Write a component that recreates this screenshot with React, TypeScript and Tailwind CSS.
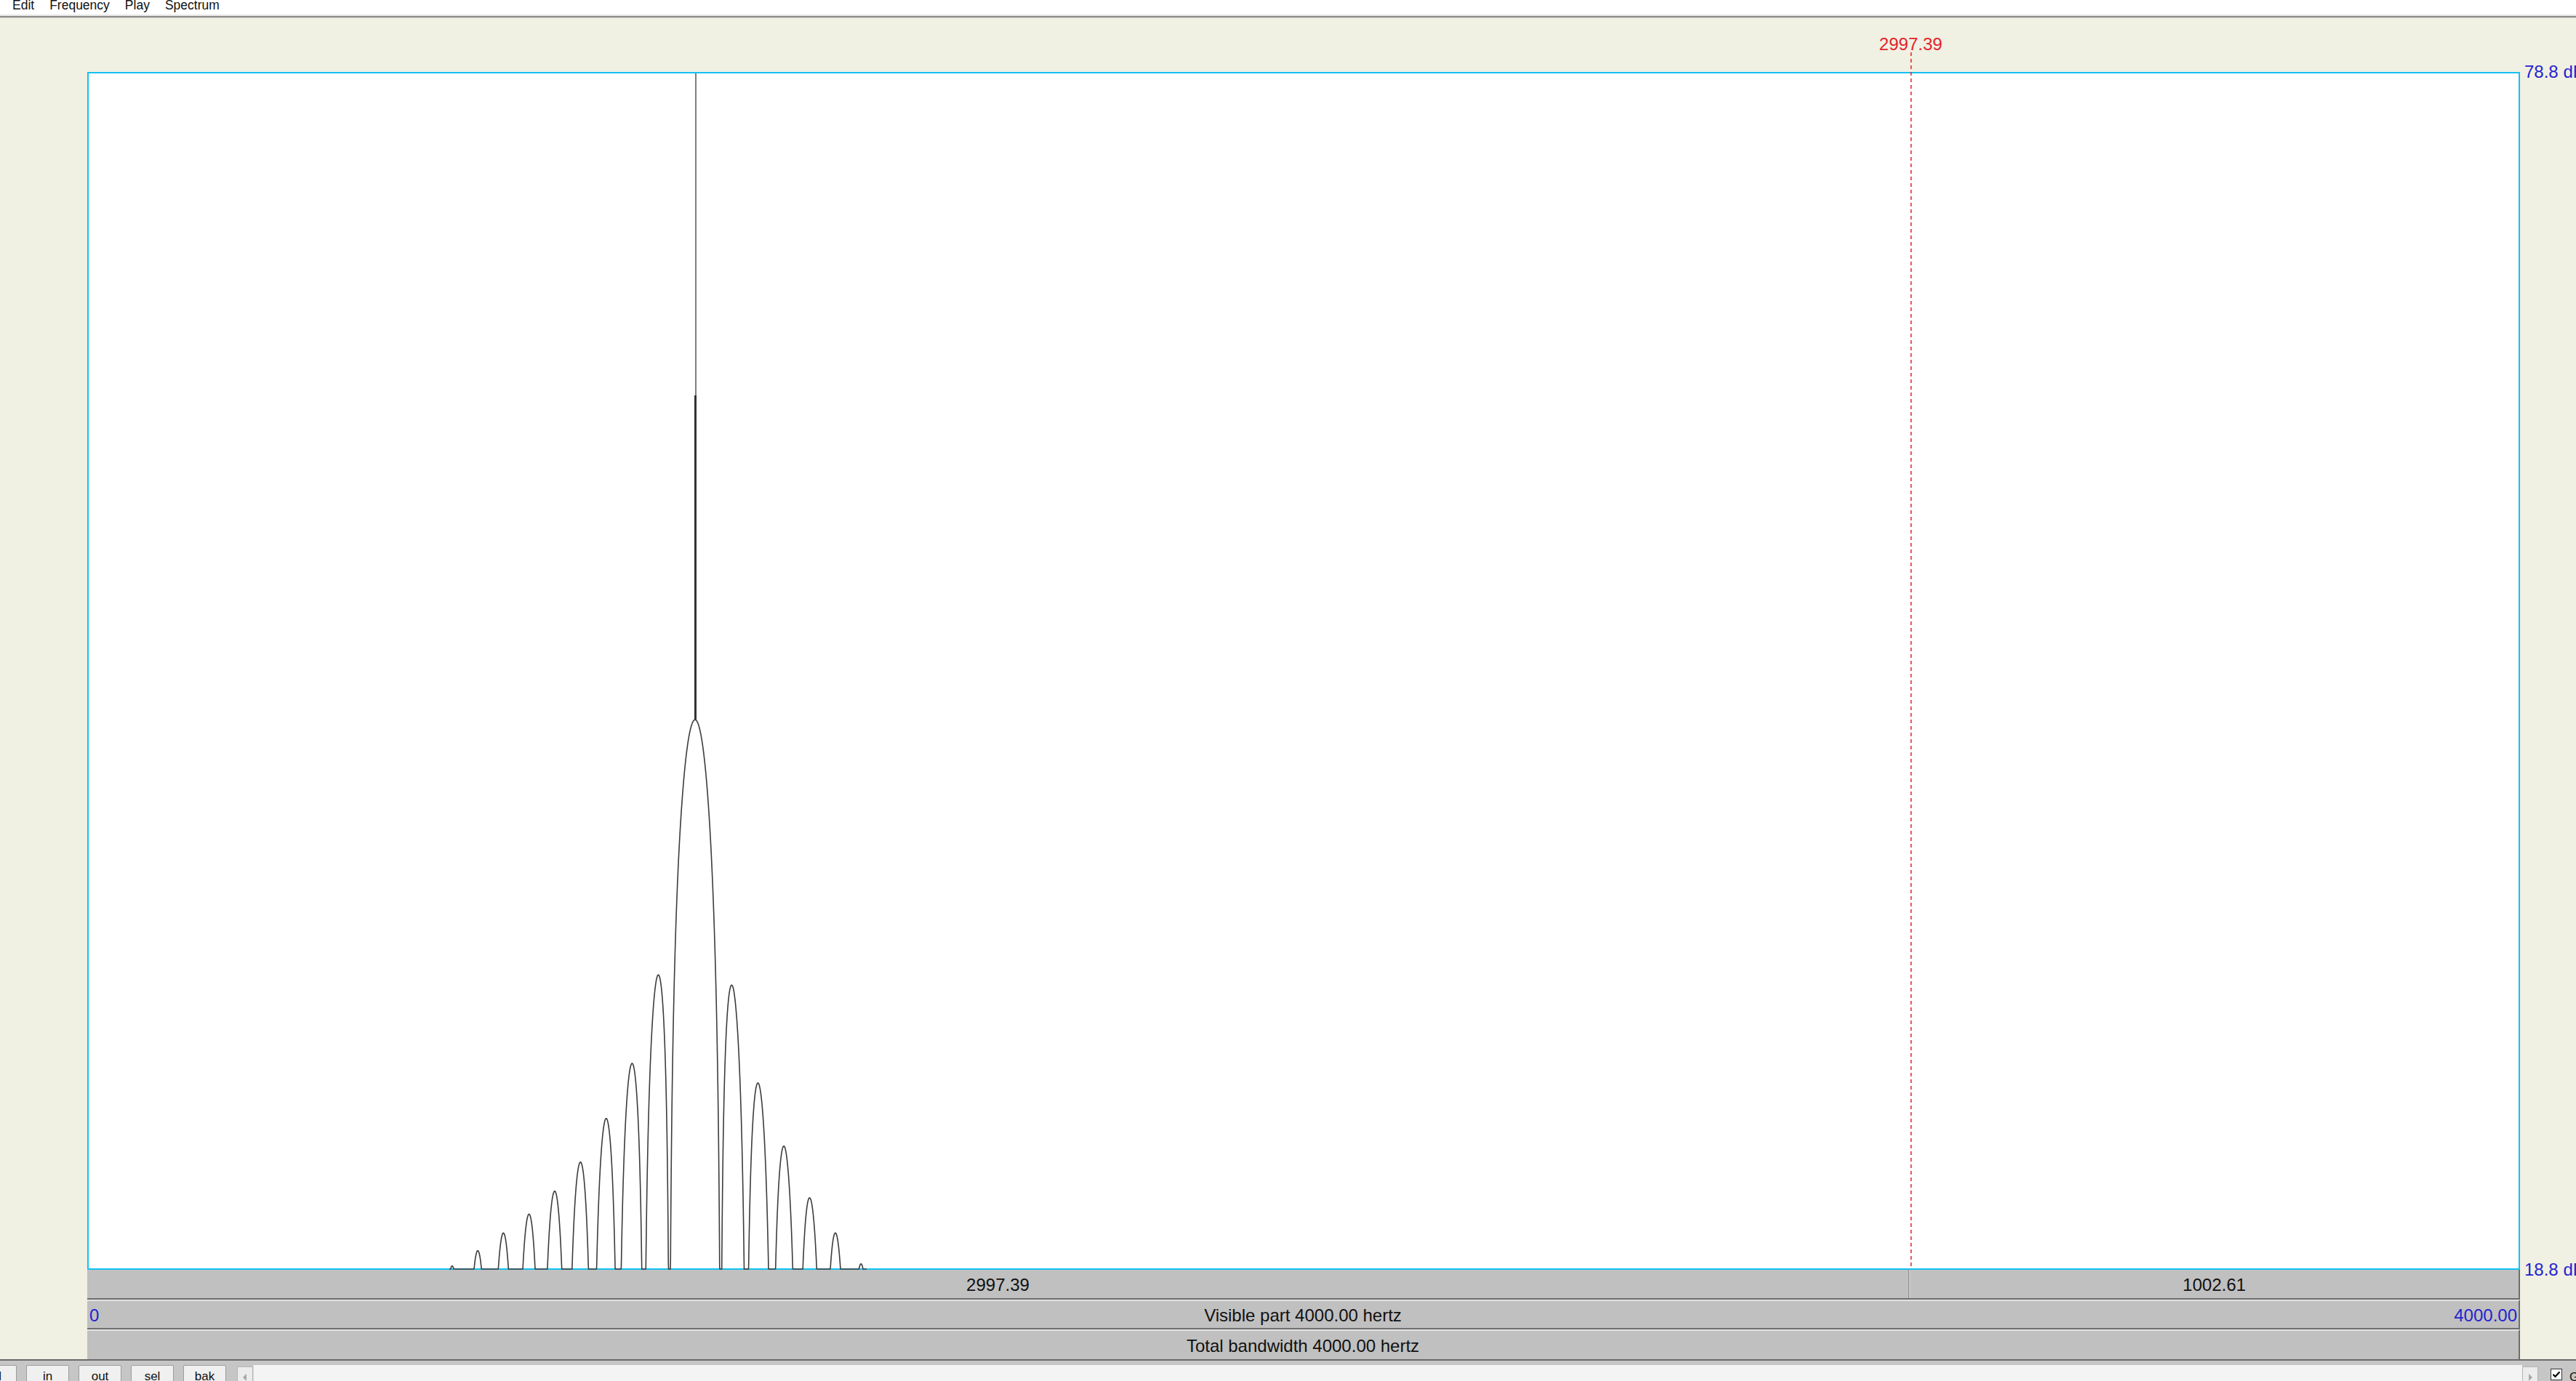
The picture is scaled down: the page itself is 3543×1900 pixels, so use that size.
import type { JSX } from "react/jsx-runtime";

// spectrum geometry, page coordinates
const TOP_Y = 100;
const BOTTOM_Y = 1746;
const DB_TOP = 78.8;
const DB_BOTTOM = 18.8;
const PX_PER_DB = (BOTTOM_Y - TOP_Y) / (DB_TOP - DB_BOTTOM);
const PEAK_X = 956;
const LOBE_W = 35.2;
const PEAK_DB = 46.35;

// small per-lobe corrections so the sidelobes lean like the original
const leftCorr = [0, 0.5, 0.6, 0.8, 0.8, 1.1, 1.4, 1.7, 1.9, 2.1, 2.3];
const rightCorr = [0, -0.05, -0.4, -0.6, -1.0, -1.0, -1.1, -1.1, -1.1];

function corr(u: number): number {
  const a = Math.abs(u);
  const list = u < 0 ? leftCorr : rightCorr;
  const pos = a - 0.5; // lobe centres sit at k + 0.5
  if (pos <= 0) return 0;
  const i = Math.floor(pos);
  const f = pos - i;
  const c0 = list[Math.min(i, list.length - 1)];
  const c1 = list[Math.min(i + 1, list.length - 1)];
  return c0 + (c1 - c0) * f;
}

function yAt(x: number): number {
  const u = (x - PEAK_X) / LOBE_W;
  const s = u === 0 ? 1 : Math.abs(Math.sin(Math.PI * u) / (Math.PI * u));
  let db = s <= 1e-9 ? -999 : PEAK_DB + 20 * Math.log10(s) + corr(u);
  if (db < DB_BOTTOM) db = DB_BOTTOM;
  return TOP_Y + (DB_TOP - db) * PX_PER_DB;
}

function spectrumPath(): string {
  const pts: string[] = [];
  for (let x = 618; x <= 1192; x += 0.25) {
    pts.push(`${x.toFixed(2)},${yAt(x).toFixed(2)}`);
  }
  return "M" + pts.join(" L");
}

const menu = ["Edit", "Frequency", "Play", "Spectrum"];
const buttons = ["in", "out", "sel", "bak"];

export default function App(): JSX.Element {
  const d = spectrumPath();

  return (
    <div className="w-[3543px] h-[1900px] overflow-hidden bg-[#f0f0e3] flex flex-col font-['Liberation_Sans',Arial,sans-serif] text-[#111]">
      {/* Menu bar */}
      <div className="h-[20px] bg-white flex gap-[21px] pl-[17px] text-[17.5px] leading-[15px] overflow-hidden">
        {menu.map((m) => (
          <span key={m}>{m}</span>
        ))}
      </div>
      <div className="h-[2px] bg-[#e6e6e6]" />
      <div className="h-[2px] bg-[#8a8a8a]" />
      <div className="h-[1px] bg-[#dcdcd0]" />

      {/* Main */}
      <div className="flex-1 flex">
        <div className="w-[120px] shrink-0" />
        <div className="w-[3346px] shrink-0 flex flex-col pt-[74px]">
          {/* Plot */}
          <div className="relative h-[1648px] border-2 border-[#12c2f2] bg-white">
            <svg
              className="absolute left-[-2px] top-[-2px] overflow-visible"
              width={3346}
              height={1648}
              viewBox="120 99 3346 1648"
            >
              <line x1={2628.5} y1={72} x2={2628.5} y2={1745} stroke="#e3242b" strokeWidth={1.6} strokeDasharray="5 4" />
              <line x1={957} y1={101} x2={957} y2={546} stroke="#555" strokeWidth={1.5} />
              <line x1={956.5} y1={544} x2={956.5} y2={991} stroke="#333" strokeWidth={3} />
              <path d={d} fill="none" stroke="#3c3c3c" strokeWidth={1.6} strokeLinejoin="round" />
            </svg>
            <span className="absolute left-[2506px] top-[-52px] -translate-x-1/2 text-[24px] leading-[24px] text-[#e3242b] whitespace-nowrap">
              2997.39
            </span>
            <span className="absolute left-[3350px] top-[-14px] text-[24px] leading-[24px] text-[#2323d0] whitespace-nowrap">
              78.8 dB
            </span>
            <span className="absolute left-[3350px] top-[1634px] text-[24px] leading-[24px] text-[#2323d0] whitespace-nowrap">
              18.8 dB
            </span>
          </div>

          {/* Selection bar */}
          <div className="h-[41px] flex bg-[#c0c0c0] border-b-2 border-b-[#6e6e6e] border-r-2 border-r-[#6e6e6e] text-[24px] leading-[24px]">
            <div className="w-[2506px] flex items-center justify-center pt-[2px] border-r border-r-[#7c7c7c]">
              2997.39
            </div>
            <div className="flex-1 flex items-center justify-center pt-[2px] border-l border-l-[#e6e6e6]">
              1002.61
            </div>
          </div>

          {/* Visible part */}
          <div className="h-[41px] grid grid-cols-[1fr_auto_1fr] items-center pt-[2px] bg-[#c0c0c0] border-t-2 border-t-[#e2e2e2] border-b-2 border-b-[#6e6e6e] border-r-2 border-r-[#6e6e6e] text-[24px] leading-[24px]">
            <span className="justify-self-start pl-[3px] text-[#2323d0]">0</span>
            <span>Visible part 4000.00 hertz</span>
            <span className="justify-self-end pr-[2px] text-[#2323d0]">4000.00</span>
          </div>

          {/* Total bandwidth */}
          <div className="h-[41px] flex items-center justify-center pt-[2px] bg-[#c0c0c0] border-t-2 border-t-[#e2e2e2] border-r-2 border-r-[#6e6e6e] text-[24px] leading-[24px]">
            Total bandwidth 4000.00 hertz
          </div>
        </div>
        <div className="flex-1" />
      </div>

      <div className="h-[2px] bg-[#6a6a6a]" />

      {/* Bottom toolbar */}
      <div className="h-[28px] bg-[#c6c6c6] flex items-start pt-[6px] overflow-hidden text-[17px] leading-[17px]">
        <div className="ml-[-36px] w-[59px] h-[30px] shrink-0 bg-[#f0f0f0] border border-[#9c9c9c] rounded-[2px] text-center pt-[6px]">
          all
        </div>
        {buttons.map((b) => (
          <div
            key={b}
            className="ml-[13px] w-[59px] h-[30px] shrink-0 bg-[#f0f0f0] border border-[#9c9c9c] rounded-[2px] text-center pt-[6px]"
          >
            {b}
          </div>
        ))}
        <div className="ml-[15px] w-[3165px] h-[30px] shrink-0 flex">
          <div className="w-[22px] mt-[2px] bg-[#ececec] border border-[#b4b4b4] flex justify-center pt-[9px]">
            <svg width="6" height="10" viewBox="0 0 6 10">
              <path d="M5 0 L0 5 L5 10 Z" fill="#a8a8a8" />
            </svg>
          </div>
          <div className="flex-1 bg-[#f4f4f4] border-l border-[#d8d8d8]" />
          <div className="w-[22px] mt-[2px] bg-[#ececec] border border-[#b4b4b4] flex justify-center pt-[9px]">
            <svg width="6" height="10" viewBox="0 0 6 10">
              <path d="M1 0 L6 5 L1 10 Z" fill="#a8a8a8" />
            </svg>
          </div>
        </div>
        <div className="ml-[17px] mt-[5px] w-[16px] h-[16px] shrink-0 bg-white border border-[#333] flex items-center justify-center">
          <svg width="12" height="12" viewBox="0 0 12 12">
            <path d="M1.5 6 L4.5 9 L10.5 2.5" fill="none" stroke="#000" strokeWidth={2.2} />
          </svg>
        </div>
        <span className="ml-[10px] mt-[8px] whitespace-nowrap">Group</span>
      </div>
    </div>
  );
}
